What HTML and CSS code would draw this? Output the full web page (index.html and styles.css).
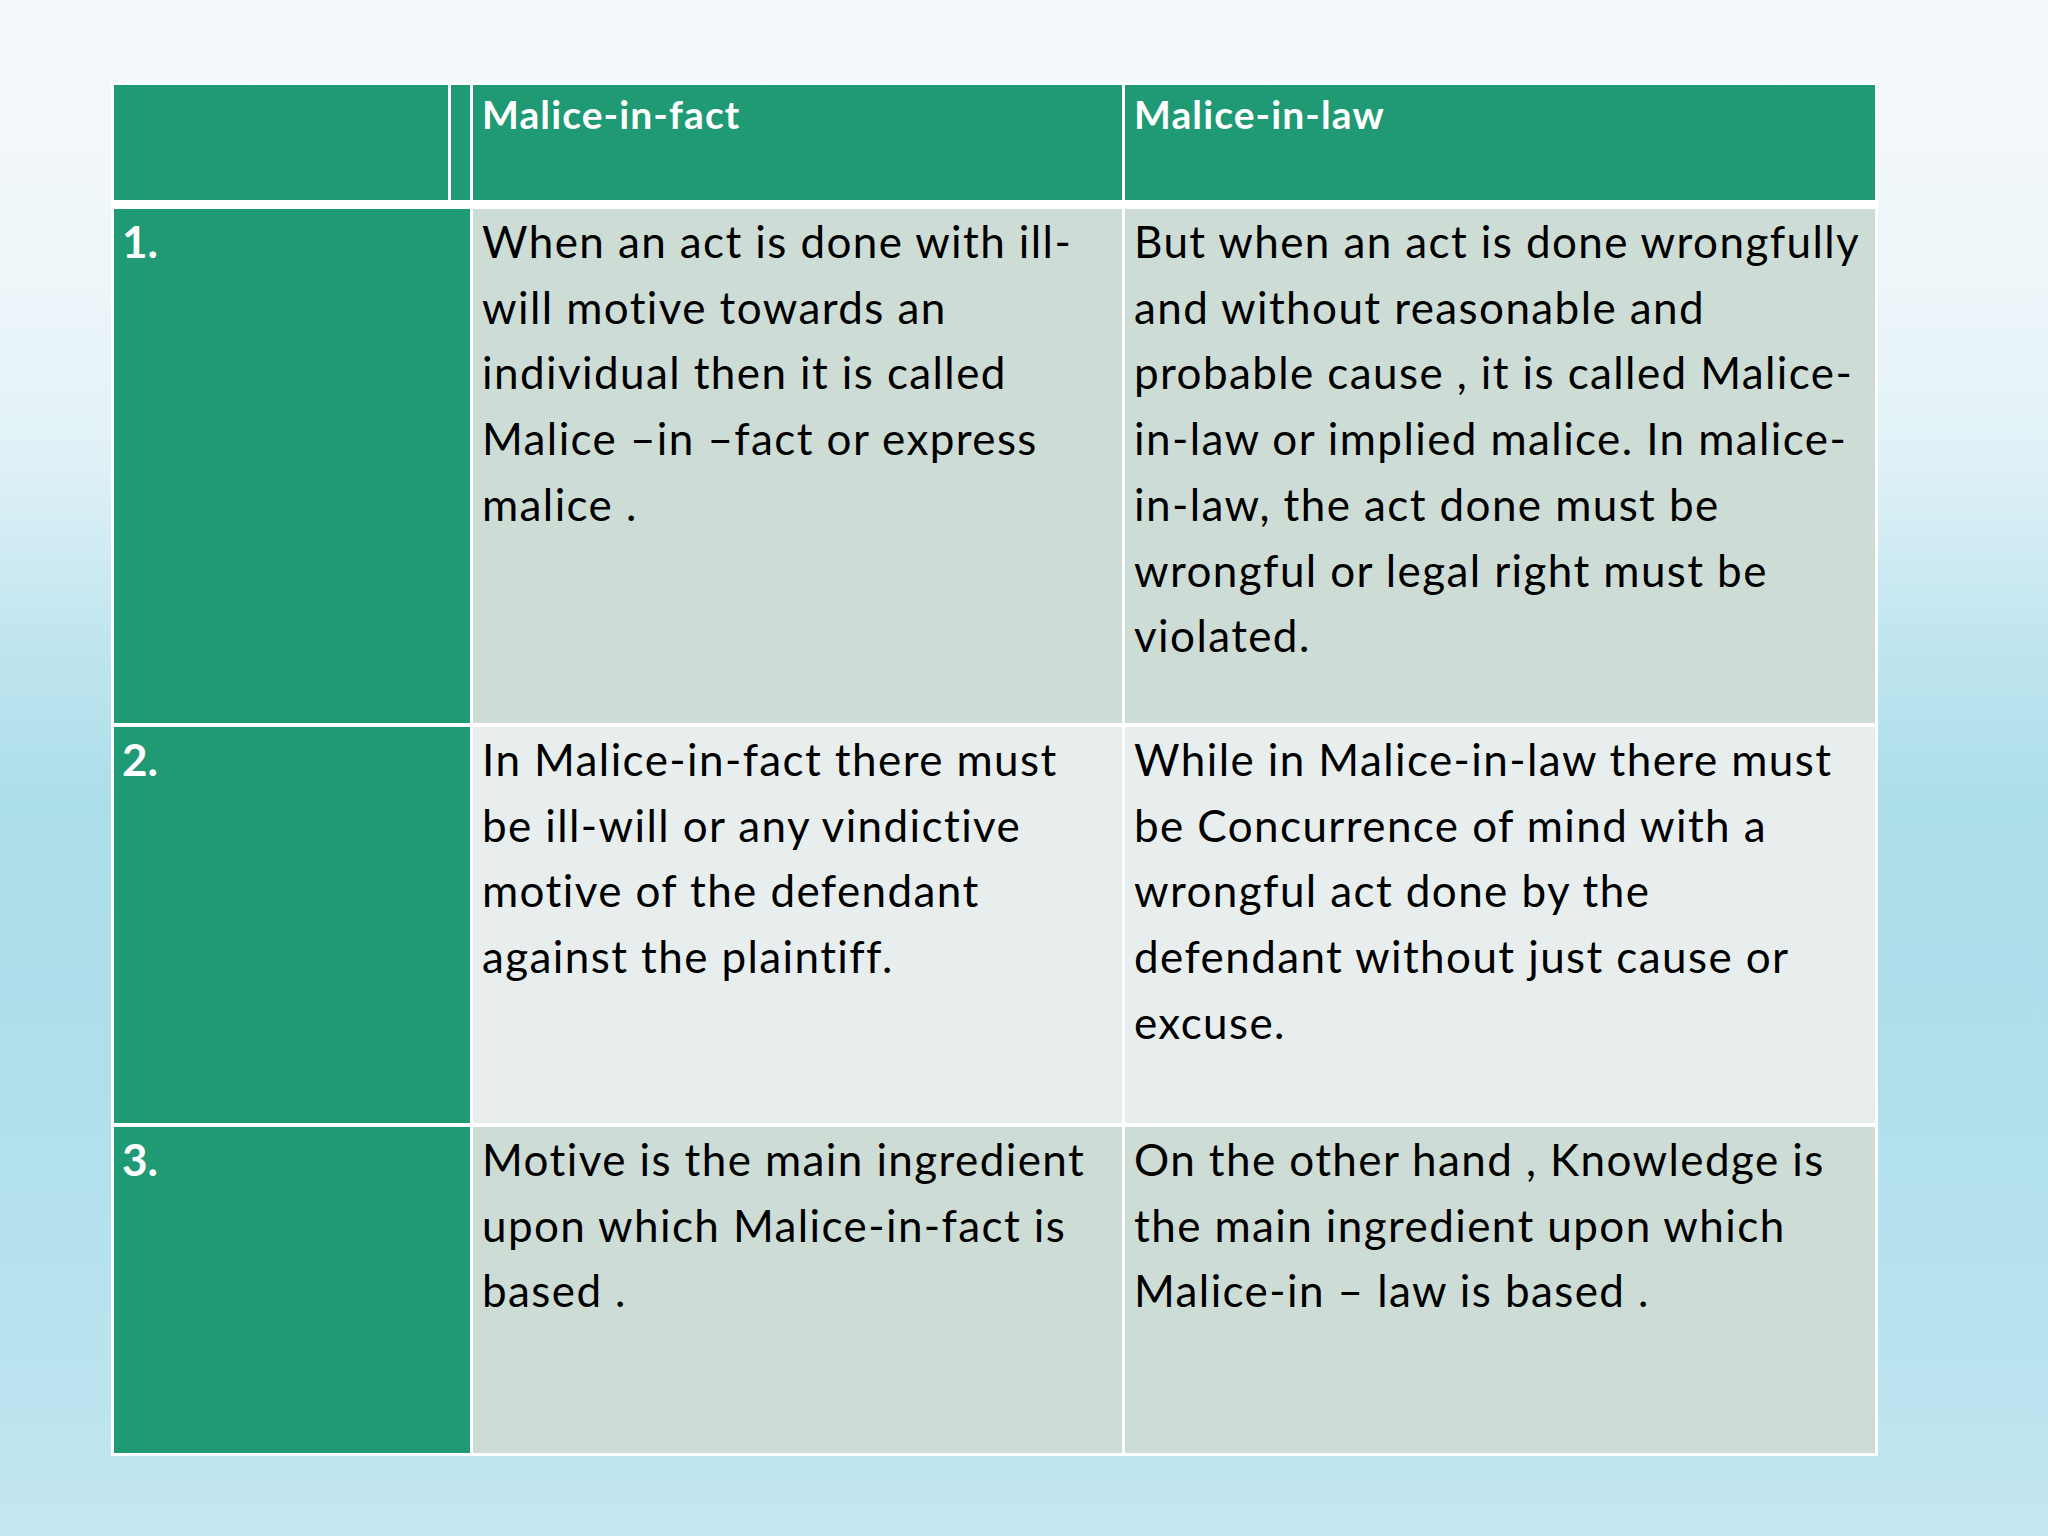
FILE: index.html
```html
<!DOCTYPE html>
<html lang="en">
<head>
<meta charset="utf-8">
<title>Malice-in-fact vs Malice-in-law</title>
<link rel="stylesheet" href="styles.css">
</head>
<body>
<main class="slide">
  <div class="table">
    <div class="cell head head-a"></div>
    <div class="cell head head-b"></div>
    <div class="cell head">Malice-in-fact</div>
    <div class="cell head">Malice-in-law</div>

    <div class="cell num">1.</div>
    <div class="cell body dark">When an act is done with ill-<br>will motive towards an<br>individual then it is called<br>Malice –in –fact or express<br>malice .</div>
    <div class="cell body dark">But when an act is done wrongfully<br>and without reasonable and<br>probable cause , it is called Malice-<br>in-law or implied malice. In malice-<br>in-law, the act done must be<br>wrongful or legal right must be<br>violated.</div>

    <div class="cell num">2.</div>
    <div class="cell body light">In Malice-in-fact there must<br>be ill-will or any vindictive<br>motive of the defendant<br>against the plaintiff.</div>
    <div class="cell body light">While in Malice-in-law there must<br>be Concurrence of mind with a<br>wrongful act done by the<br>defendant without just cause or<br>excuse.</div>

    <div class="cell num">3.</div>
    <div class="cell body dark">Motive is the main ingredient<br>upon which Malice-in-fact is<br>based .</div>
    <div class="cell body dark">On the other hand , Knowledge is<br>the main ingredient upon which<br>Malice-in – law is based .</div>
  </div>
</main>
</body>
</html>
```
FILE: styles.css
```css
html, body {
  margin: 0;
  padding: 0;
}
body {
  width: 2048px;
  height: 1536px;
  overflow: hidden;
  background: linear-gradient(to bottom,
    #f6f9fb 0%,
    #eef6f9 18%,
    #e0f1f7 30%,
    #c4e7f1 40%,
    #acdeea 52%,
    #b0dfec 70%,
    #b9e3ef 88%,
    #c4e7f1 100%);
  font-family: Lato, "Open Sans", sans-serif;
}
.slide {
  padding: 82px 0 0 111px;
}
.table {
  display: inline-grid;
  grid-template-columns: 334px 19px 649px 750px;
  grid-template-rows: 120px 514px 396px 326px;
  column-gap: 3px;
  row-gap: 4px;
  padding: 3px;
  background: #ffffff;
}
.cell {
  box-sizing: border-box;
}
.head {
  background: #1f9a74;
  color: #ffffff;
  font-weight: 700;
  font-size: 39px;
  letter-spacing: 1.1px;
  line-height: 58px;
  padding: 0 0 0 9px;
  margin-bottom: 5px;
}
.num {
  grid-column: 1 / span 2;
  background: #1f9a74;
  color: #ffffff;
  font-weight: 700;
  font-size: 44px;
  line-height: 65.7px;
  padding: 0 0 0 8px;
}
.body {
  color: #000000;
  font-size: 44px;
  letter-spacing: 1.4px;
  line-height: 65.7px;
  padding: 0 0 0 9px;
  white-space: nowrap;
}
.dark {
  background: #cedcd6;
}
.light {
  background: #e8eeee;
}
```
